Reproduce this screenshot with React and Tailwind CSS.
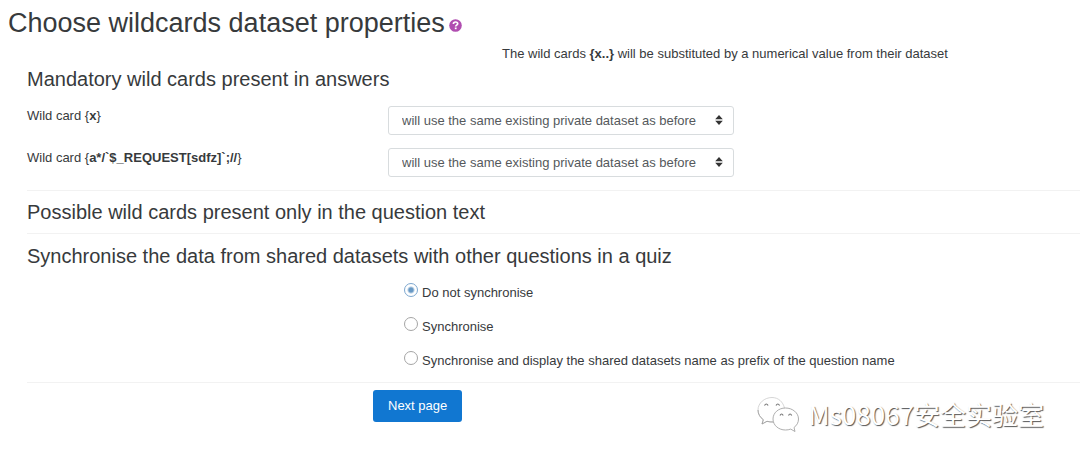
import { useState } from "react";

function DatasetSelect({ id }) {
  return (
    <div className="relative w-[346px]">
      <select
        id={id}
        className="block h-[29px] w-full appearance-none rounded-[3px] border border-[#d8dcde] bg-white pr-7 pl-[13px] text-[13px] leading-5 text-[#55595c]"
      >
        <option>will use the same existing private dataset as before</option>
      </select>
      <svg
        viewBox="0 0 8 10"
        aria-hidden="true"
        className="pointer-events-none absolute top-[9px] right-[11px] h-[10px] w-2 fill-[#333]"
      >
        <path d="M4 0 7.800 4.200H.2zM4 10 .2 5.800h7.600z" />
      </svg>
    </div>
  );
}

function WildCardRow({ id, name }) {
  return (
    <div className="flex h-[42px] items-start">
      <label htmlFor={id} className="w-[361px] shrink-0 text-[13px] leading-5">
        Wild card {"{"}
        <b>{name}</b>
        {"}"}
      </label>
      <DatasetSelect id={id} />
    </div>
  );
}

const syncOptions = [
  "Do not synchronise",
  "Synchronise",
  "Synchronise and display the shared datasets name as prefix of the question name",
];

function SyncOptions() {
  const [selected, setSelected] = useState(0);
  return (
    <div role="radiogroup" aria-label="Synchronise" className="flex flex-col gap-[14px] pt-3 pb-[11px] pl-[377px]">
      {syncOptions.map((text, i) => (
        <label key={text} className="flex items-start gap-1 text-[13px] leading-5">
          <input
            type="radio"
            name="synchronise"
            checked={selected === i}
            onChange={() => setSelected(i)}
            className="size-[14px] shrink-0 appearance-none rounded-full border border-[#a5a5a5] bg-white checked:border-[#7da7cf] checked:bg-[radial-gradient(circle,#6798c4_0_2px,white_4px)]"
          />
          <span>{text}</span>
        </label>
      ))}
    </div>
  );
}

function Watermark() {
  return (
    <div className="absolute top-[396px] right-9 flex items-center gap-[10px]">
      <svg
        viewBox="0 0 42 36"
        aria-hidden="true"
        className="h-9 w-[42px] fill-white stroke-[#999]"
        strokeWidth="0.8"
        strokeLinejoin="round"
      >
        <path d="M15 1.500C7.500 1.500 1 7 1 14c0 4 2 7.300 5.300 9.700L5 28l5-2.700c2 .6 4 .8 6.500.7h11V12C26 6 21.500 1.500 15 1.500z" stroke="#ccc" />
        <path d="M1 14c0 4 2 7.300 5.300 9.700L5 28l5-2.700c2 .6 4 .8 6.500.7" fill="none" />
        <path d="M28.500 12C21.500 12 16 16.800 16 23s5.500 11 12.500 11c2 0 3.600-.3 5.200-.9L38 35.500 37 31.500c2.800-2 4.500-5 4.500-8.500C41.500 16.800 35.500 12 28.500 12z" />
        <path d="M7.500 9.500q1.800-3 3.600 0M19 9.500q1.800-3 3.600 0M23 19.500q1.600-3 3.200 0M31.500 19.500q1.600-3 3.200 0" fill="none" stroke="#777" strokeWidth="1.200" />
      </svg>
      <span className="font-['Noto_Sans_CJK_SC',sans-serif] text-[26px] leading-9 whitespace-nowrap text-white [text-shadow:1px_1px_1px_#555]">
        Ms08067安全实验室
      </span>
    </div>
  );
}

export default function App() {
  return (
    <main className="relative bg-white pt-[7px] pb-10 font-['Liberation_Sans',Arial,sans-serif] text-[#373a3c]">
      <div className="flex items-center gap-1 pl-2">
        <h1 className="text-[27px] leading-8">Choose wildcards dataset properties</h1>
        <button type="button" aria-label="Help" className="mt-1">
          <svg viewBox="0 0 13 13" aria-hidden="true" className="size-[13px]">
            <circle cx="6.5" cy="6.5" r="6.3" fill="#b04db0" />
            <path d="M4.400 5C4.400 3.600 5.200 3 6.600 3s2.100.7 2.100 1.800c0 1.400-2 1.300-2 2.700" fill="none" stroke="white" strokeWidth="1.700" />
            <path d="M5.800 8.500h1.800v1.700H5.800z" fill="white" />
          </svg>
        </button>
      </div>
      <p className="mt-[5px] pl-[370px] text-center text-[13px] leading-5">
        The wild cards <b>{"{x..}"}</b> will be substituted by a numerical value from their dataset
      </p>
      <form className="pl-[27px]" onSubmit={(e) => e.preventDefault()}>
        <h2 className="text-xl leading-[30px]">Mandatory wild cards present in answers</h2>
        <div className="pt-3">
          <WildCardRow id="wildcard-x" name="x" />
          <WildCardRow id="wildcard-request" name="a*/`$_REQUEST[sdfz]`;//" />
        </div>
        <h2 className="border-t border-[#f2f2f2] pt-[6px] pb-[6px] text-xl leading-[30px]">
          Possible wild cards present only in the question text
        </h2>
        <h2 className="border-t border-[#f2f2f2] pt-[7px] text-xl leading-[30px]">
          Synchronise the data from shared datasets with other questions in a quiz
        </h2>
        <SyncOptions />
        <div className="border-t border-[#f2f2f2] pt-[7px] pl-[346px]">
          <button type="submit" className="h-8 rounded-[3px] bg-[#1177d1] px-[15px] text-[13px] leading-5 text-white">
            Next page
          </button>
        </div>
      </form>
      <Watermark />
    </main>
  );
}
